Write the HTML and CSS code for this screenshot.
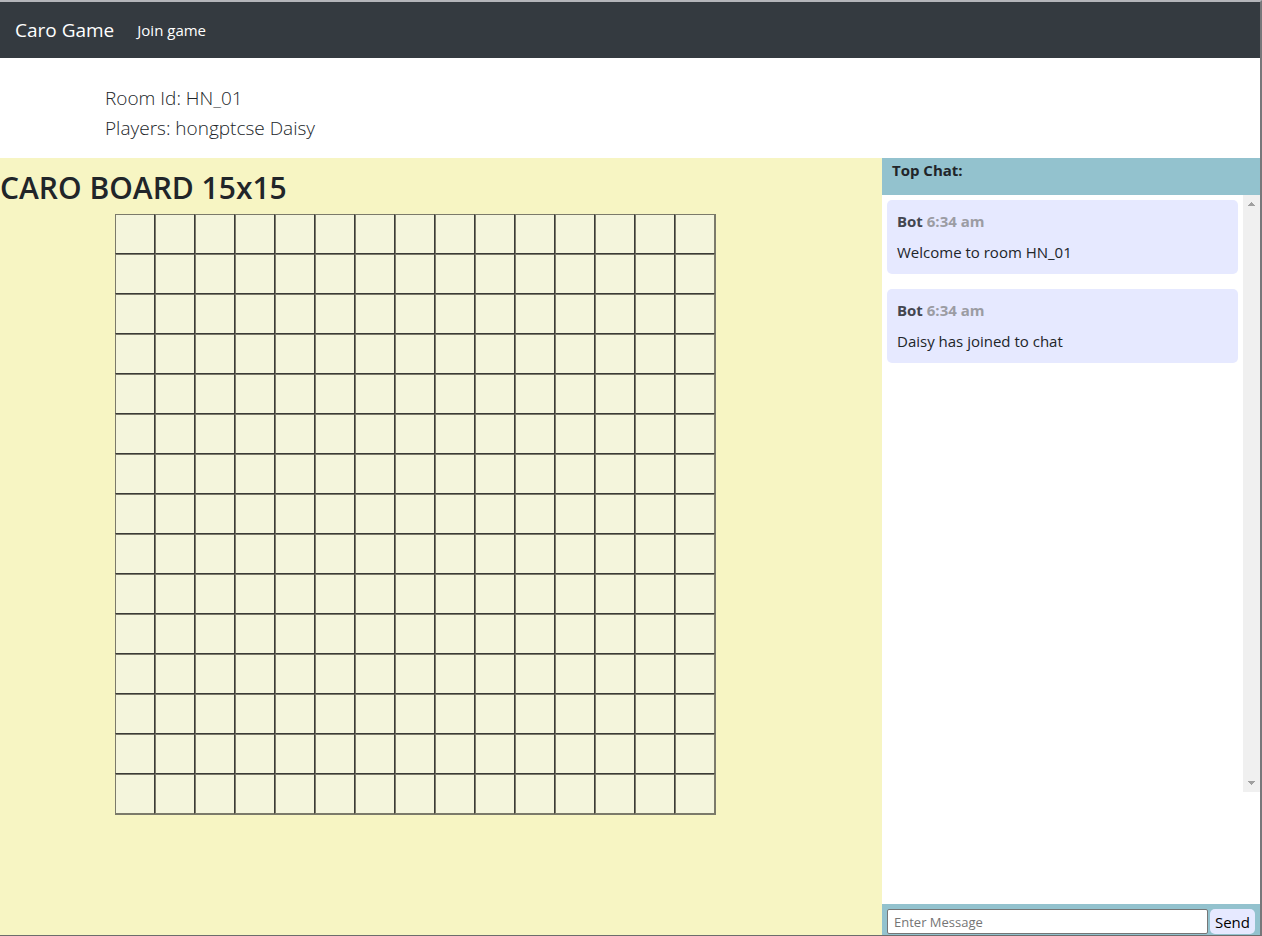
FILE: index.html
```html
<!DOCTYPE html>
<html lang="en">
<head>
<meta charset="utf-8">
<title>Caro Game</title>
<link rel="stylesheet" href="styles.css">
</head>
<body>
<div class="window">
  <nav class="navbar">
    <a class="brand" href="#">Caro Game</a>
    <a class="nav-link" href="#">Join game</a>
  </nav>
  <header class="room-info">
    <p>Room Id: HN_01</p>
    <p>Players: hongptcse Daisy</p>
  </header>
  <main class="room">
    <section class="game">
      <h2>CARO BOARD 15x15</h2>
      <div class="board" id="board"></div>
    </section>
    <section class="chat">
      <h3 class="chat-title">Top Chat:</h3>
      <div class="chat-body">
        <div class="messages">
          <article class="message">
            <p class="meta">Bot <span>6:34 am</span></p>
            <p class="text">Welcome to room HN_01</p>
          </article>
          <article class="message">
            <p class="meta">Bot <span>6:34 am</span></p>
            <p class="text">Daisy has joined to chat</p>
          </article>
        </div>
        <div class="scrollbar" aria-hidden="true">
          <svg width="7" height="4" viewBox="0 0 7 4" shape-rendering="crispEdges"><path d="M3 0h1v1h1v1h1v1h1v1H0V3h1V2h1V1h1z"/></svg>
          <svg width="7" height="4" viewBox="0 0 7 4" shape-rendering="crispEdges"><path d="M0 0h7v1H6v1H5v1H4v1H3V3H2V2H1V1H0z"/></svg>
        </div>
      </div>
      <form class="composer">
        <input type="text" placeholder="Enter Message" aria-label="Enter Message">
        <button type="button">Send</button>
      </form>
    </section>
  </main>
</div>
<script src="board.js"></script>
</body>
</html>
```
FILE: styles.css
```css
* { box-sizing: border-box; }

body {
  margin: 0;
  font-family: "Open Sans", "Noto Sans", sans-serif;
  font-size: 15px;
  line-height: 24px;
  color: #212529;
  background: #fff;
}

h2, h3, p { margin: 0; }

.window {
  display: flex;
  flex-direction: column;
  min-height: 100vh;
  border-top: 2px solid #b4b5ba;
  border-right: 2px solid #77777a;
  border-bottom: 1px solid #6c6c6c;
}

.navbar {
  display: flex;
  align-items: center;
  gap: 23px;
  height: 56px;
  padding: 0 15px;
  background: #343a40;
}

.navbar a { color: #fff; text-decoration: none; }
.brand { font-size: 19px; }

.room-info {
  padding: 25px 105px 15px;
  font-size: 19px;
  font-weight: 300;
  line-height: 30px;
}

.room { display: flex; flex: 1; }

.game {
  width: 70%;
  padding-top: 11px;
  background: #f7f5c3;
}

.game h2 {
  margin-bottom: 7px;
  font-size: 30px;
  font-weight: 600;
  line-height: 38px;
}

.board {
  display: grid;
  grid-template-columns: repeat(15, 40px);
  grid-auto-rows: 40px;
  width: max-content;
  margin-left: 115px;
  border-right: 1px solid #7b7a6a;
  border-bottom: 1px solid #7b7a6a;
}

.cell {
  padding: 0;
  border: 1px solid;
  border-color: #7b7a6a #3b3b37 #3b3b37 #7b7a6a;
  border-radius: 0;
  background: #f4f5dc;
}

.cell:nth-child(15n) { border-right-color: #7b7a6a; }
.cell:nth-child(n + 211) { border-bottom-color: #7b7a6a; }

.chat {
  display: flex;
  flex: 1;
  flex-direction: column;
}

.chat-title {
  height: 37px;
  padding-left: 10px;
  font-size: 15px;
  font-weight: 700;
  background: #93c2ce;
}

.chat-body {
  display: flex;
  flex: 1;
  margin-bottom: 112px;
}

.messages {
  display: flex;
  flex: 1;
  flex-direction: column;
  gap: 15px;
  padding: 5px;
}

.message {
  padding: 9px 10px 10px;
  border-radius: 5px;
  background: #e6e9ff;
}

.meta {
  margin-bottom: 7px;
  font-weight: 700;
  color: #434650;
}

.meta span { color: #9b9ca3; }

.scrollbar {
  display: flex;
  flex-direction: column;
  align-items: center;
  justify-content: space-between;
  width: 17px;
  padding: 7px 0;
  background: #f0f0f0;
}

.scrollbar svg { fill: #a0a0a0; }

.composer {
  display: flex;
  gap: 2px;
  padding: 5px 5px 1px;
  background: #93c2ce;
}

.composer input {
  flex: 1;
  min-width: 0;
  height: 25px;
  padding: 1px 6px;
  border: 1px solid #767676;
  border-radius: 2px;
  font: 13px "Open Sans", sans-serif;
}

.composer input::placeholder { color: #757575; }

.composer button {
  height: 25px;
  padding: 0 5px;
  border: 0;
  border-radius: 5px;
  font: 15px "Open Sans", sans-serif;
  color: #000;
  background: #e6e9ff;
}
```
FILE: board.js
```js
const SIZE = 15;
const board = document.getElementById("board");

for (let row = 1; row <= SIZE; row++) {
  for (let col = 1; col <= SIZE; col++) {
    const cell = document.createElement("button");
    cell.type = "button";
    cell.className = "cell";
    cell.setAttribute("aria-label", `Row ${row}, column ${col}`);
    board.append(cell);
  }
}
```
